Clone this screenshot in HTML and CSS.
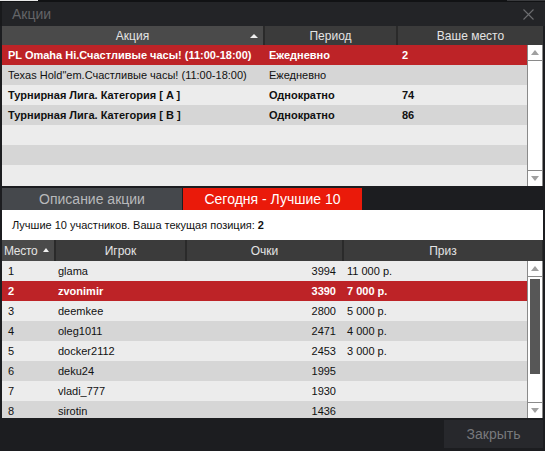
FILE: index.html
```html
<!DOCTYPE html>
<html lang="ru">
<head>
<meta charset="utf-8">
<title>Акции</title>
<link rel="stylesheet" href="styles.css">
</head>
<body>
<div class="window">
  <div class="topline"><span class="topline-mark"></span><span class="topline-right"></span></div>
  <div class="titlebar">
    <span class="title">Акции</span>
    <svg class="close" width="11" height="11" viewBox="0 0 11 11"><path d="M0.5 0.5 L10.5 10.5 M10.5 0.5 L0.5 10.5" stroke="#6c6d70" stroke-width="1.1" fill="none"/></svg>
  </div>

  <div class="promo">
    <div class="thead promo-cols">
      <div class="th sorted">Акция<span class="sort-up"></span></div>
      <div class="th">Период</div>
      <div class="th">Ваше место</div>
    </div>
    <div class="tbody promo-body">
      <div class="rows">
        <div class="row promo-cols sel"><span class="c1">PL Omaha Hi.Счастливые часы! (11:00-18:00)</span><span class="c2">Ежедневно</span><span class="c3">2</span></div>
        <div class="row promo-cols dark"><span class="c1">Texas Hold"em.Счастливые часы! (11:00-18:00)</span><span class="c2">Ежедневно</span><span class="c3"></span></div>
        <div class="row promo-cols light bold"><span class="c1">Турнирная Лига. Категория [ A ]</span><span class="c2">Однократно</span><span class="c3">74</span></div>
        <div class="row promo-cols dark bold"><span class="c1">Турнирная Лига. Категория [ B ]</span><span class="c2">Однократно</span><span class="c3">86</span></div>
        <div class="row light"></div>
        <div class="row dark"></div>
        <div class="row light"></div>
      </div>
      <div class="scrollbar">
        <div class="sb-btn up"><span class="tri-up"></span></div>
        <div class="sb-track"></div>
        <div class="sb-btn down"><span class="tri-down"></span></div>
      </div>
    </div>
  </div>

  <div class="tabs">
    <div class="tab">Описание акции</div>
    <div class="tab active">Сегодня - Лучшие 10</div>
  </div>

  <div class="info">Лучшие 10 участников. Ваша текущая позиция: <b>2</b></div>

  <div class="leaders">
    <div class="thead lead-cols">
      <div class="th sorted left">Место<span class="sort-up small"></span></div>
      <div class="th">Игрок</div>
      <div class="th">Очки</div>
      <div class="th">Приз</div>
    </div>
    <div class="tbody lead-body">
      <div class="rows">
        <div class="row lead-cols light"><span class="p">1</span><span class="n">glama</span><span class="s">3994</span><span class="z">11 000 р.</span></div>
        <div class="row lead-cols sel"><span class="p">2</span><span class="n">zvonimir</span><span class="s">3390</span><span class="z">7 000 р.</span></div>
        <div class="row lead-cols light"><span class="p">3</span><span class="n">deemkee</span><span class="s">2800</span><span class="z">5 000 р.</span></div>
        <div class="row lead-cols dark"><span class="p">4</span><span class="n">oleg1011</span><span class="s">2471</span><span class="z">4 000 р.</span></div>
        <div class="row lead-cols light"><span class="p">5</span><span class="n">docker2112</span><span class="s">2453</span><span class="z">3 000 р.</span></div>
        <div class="row lead-cols dark"><span class="p">6</span><span class="n">deku24</span><span class="s">1995</span><span class="z"></span></div>
        <div class="row lead-cols light"><span class="p">7</span><span class="n">vladi_777</span><span class="s">1930</span><span class="z"></span></div>
        <div class="row lead-cols dark"><span class="p">8</span><span class="n">sirotin</span><span class="s">1436</span><span class="z"></span></div>
      </div>
      <div class="scrollbar">
        <div class="sb-btn up"><span class="tri-up"></span></div>
        <div class="sb-track"><div class="sb-thumb"></div></div>
        <div class="sb-btn down"><span class="tri-down"></span></div>
      </div>
    </div>
  </div>

  <div class="footer">
    <button class="close-btn">Закрыть</button>
  </div>
</div>
</body>
</html>
```

FILE: styles.css
```css
* { box-sizing: border-box; }
html, body {
  margin: 0;
  padding: 0;
  background: #1c1d20;
}
body {
  width: 545px;
  height: 451px;
  overflow: hidden;
  font-family: "Liberation Sans", Arial, sans-serif;
  font-size: 11px;
  color: #111;
}
.window {
  width: 545px;
  height: 451px;
  display: flex;
  flex-direction: column;
}
.topline {
  height: 2px;
  background: #111214;
  display: flex;
  justify-content: space-between;
}
.topline-mark {
  width: 38px;
  height: 1px;
  background: #e8e8e8;
}
.topline-right {
  width: 38px;
  height: 1px;
  background: #3a3b3e;
}
.titlebar {
  height: 24px;
  background: #232427;
  display: flex;
  align-items: center;
  justify-content: space-between;
  padding: 0 11px 0 12px;
  border-left: 2px solid #18191b;
}
.title {
  color: #646568;
  font-size: 14px;
  margin-left: -2px;
}
.close { display: block; }

.promo, .leaders {
  margin-left: 2px;
  width: 541px;
}
.thead {
  background: #2a2a2a;
  color: #e4e4e4;
  font-size: 12px;
}
.th {
  background: #3b3b3b;
  display: flex;
  align-items: center;
  justify-content: center;
  position: relative;
}
.th.sorted { background: #4a4a4a; }
.th.left { justify-content: flex-start; padding-left: 2px; letter-spacing: -0.3px; }
.sort-up {
  position: absolute;
  right: 5px;
  top: 8px;
  width: 0;
  height: 0;
  border-left: 4px solid transparent;
  border-right: 4px solid transparent;
  border-bottom: 4px solid #f0f0f0;
}
.sort-up.small { right: 5px; border-left-width: 3.5px; border-right-width: 3.5px; }

.promo-cols {
  display: grid;
  grid-template-columns: 261px 131px 145px;
  column-gap: 2px;
}
.promo .thead { height: 19px; }

.tbody {
  display: flex;
  background: #ececec;
  overflow: hidden;
}
.rows {
  flex: 1;
  display: flex;
  flex-direction: column;
  overflow: hidden;
}
.row {
  height: 20px;
  flex: none;
  align-items: center;
  line-height: 20px;
  white-space: nowrap;
}
.row.light { background: #ececec; }
.row.dark { background: #d6d6d6; }
.row.sel { background: #bd2327; color: #fff; font-weight: bold; }
.row.bold { font-weight: bold; }
.promo-body { height: 141px; }
.promo .row.promo-cols { grid-template-columns: 263px 131px 131px; column-gap: 0; }
.c1 { padding-left: 6px; }
.c2 { padding-left: 4px; }
.c3 { padding-left: 6px; }

.scrollbar {
  width: 16px;
  flex: none;
  background: #fff;
  border-left: 1px solid #8a8a8a;
  border-right: 1px solid #8a8a8a;
  display: flex;
  flex-direction: column;
}
.sb-btn {
  height: 16px;
  display: flex;
  align-items: center;
  justify-content: center;
  flex: none;
}
.sb-btn.up { border-bottom: 1px solid #8a8a8a; }
.sb-btn.down { border-top: 1px solid #8a8a8a; }
.sb-track {
  flex: 1;
  padding: 2px 2px;
}
.sb-thumb {
  height: 95px;
  background: #575757;
}
.tri-up {
  width: 0; height: 0;
  border-left: 4px solid transparent;
  border-right: 4px solid transparent;
  border-bottom: 5px solid #a0a0a0;
}
.tri-down {
  width: 0; height: 0;
  border-left: 4px solid transparent;
  border-right: 4px solid transparent;
  border-top: 5px solid #a0a0a0;
}

.tabs {
  margin-top: 2px;
  margin-left: 2px;
  height: 22px;
  display: flex;
}
.tab {
  width: 180px;
  background: #45484c;
  color: #b8b9bb;
  font-size: 14px;
  display: flex;
  align-items: center;
  justify-content: center;
}
.tab.active {
  width: 179px;
  margin-left: 1px;
  background: #ea1a0a;
  color: #fff;
}

.info {
  margin-left: 2px;
  width: 541px;
  height: 30px;
  background: #fff;
  display: flex;
  align-items: center;
  padding-left: 10px;
  font-size: 11px;
  color: #111;
}
.info b { margin-left: 3px; }

.lead-cols {
  display: grid;
  grid-template-columns: 52px 129px 155px 198px;
  column-gap: 2px;
}
.leaders .thead { height: 21px; }
.lead-body { height: 157px; }
.leaders .row.lead-cols { grid-template-columns: 52px 130px 156px 187px; column-gap: 0; }
.p { padding-left: 6px; }
.n { padding-left: 4px; }
.s { text-align: right; padding-right: 4px; }
.z { padding-left: 7px; }

.footer {
  flex: 1;
  display: flex;
  justify-content: flex-end;
  align-items: flex-start;
  padding-top: 2px;
  padding-right: 2px;
}
.close-btn {
  width: 99px;
  height: 28px;
  background: #27282c;
  border: none;
  color: #78797c;
  font-family: "Liberation Sans", Arial, sans-serif;
  font-size: 14px;
  padding: 0;
}
```
